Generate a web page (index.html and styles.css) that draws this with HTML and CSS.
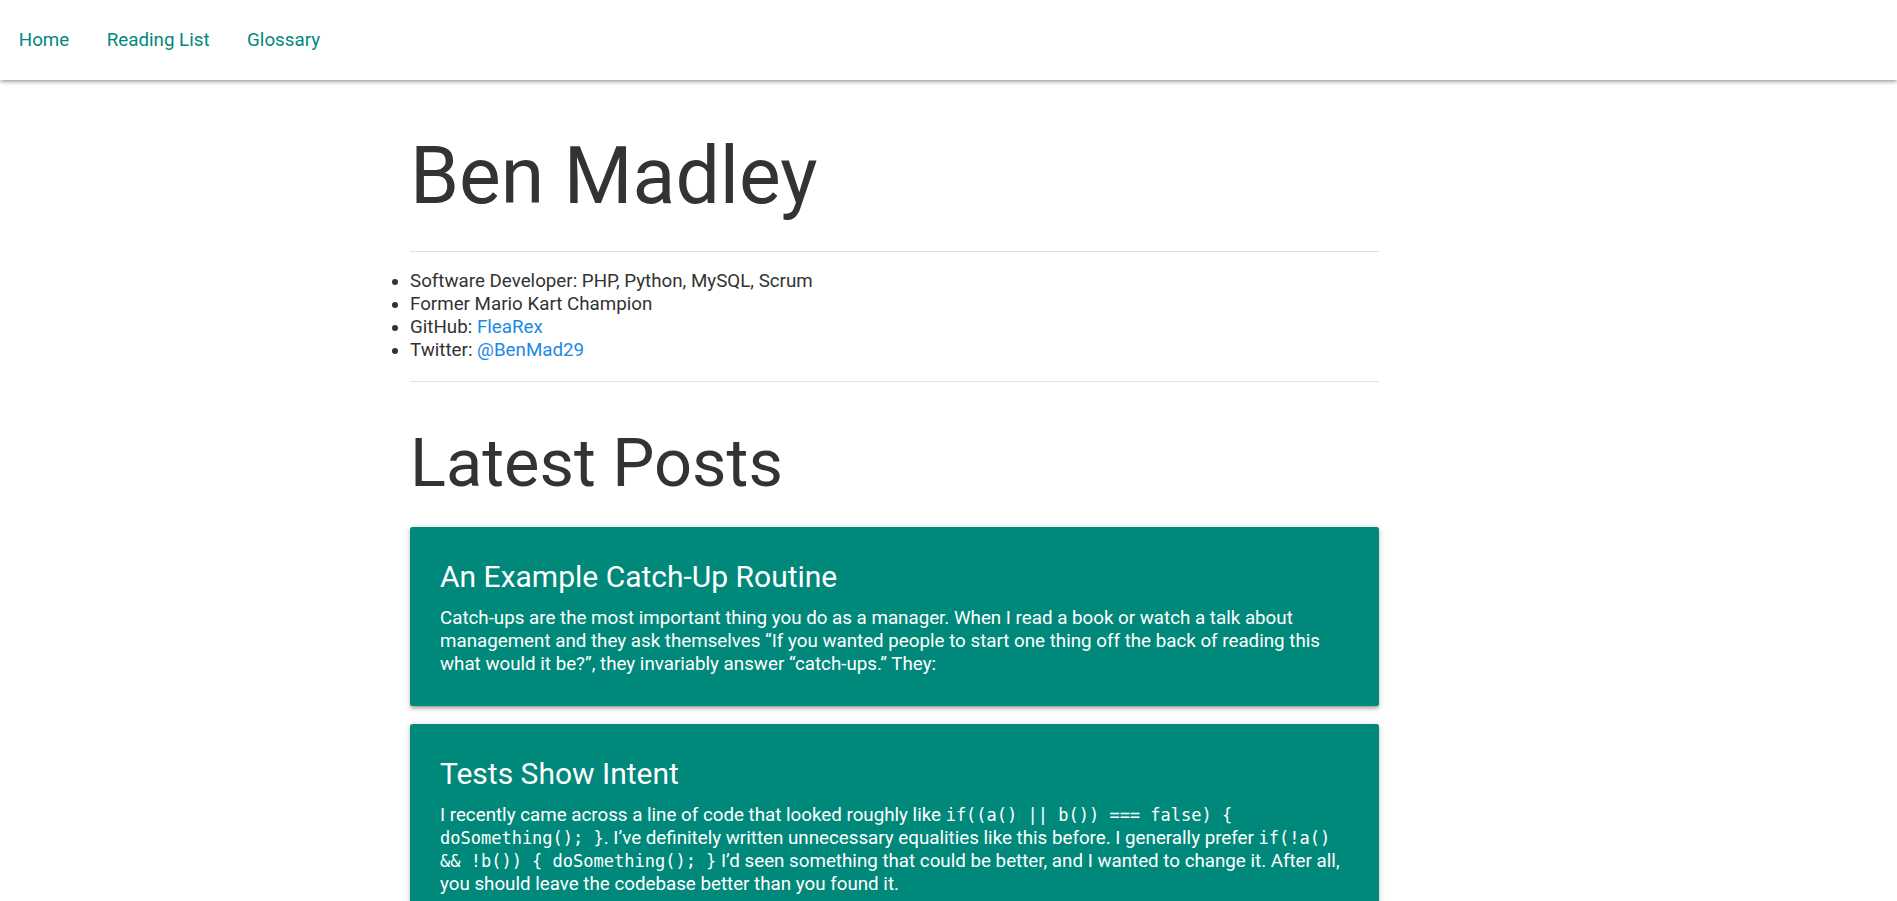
FILE: index.html
```html
<!DOCTYPE html>
<html lang="en">
<head>
<meta charset="utf-8">
<title>Ben Madley</title>
<link rel="stylesheet" href="styles.css">
</head>
<body>
<nav class="topnav">
  <ul class="nav-links">
    <li><a href="#">Home</a></li>
    <li><a href="#">Reading List</a></li>
    <li><a href="#">Glossary</a></li>
  </ul>
</nav>
<main class="content">
  <h1 class="page-title">Ben Madley</h1>
  <hr class="divider">
  <ul class="about">
    <li>Software Developer: PHP, Python, MySQL, Scrum</li>
    <li>Former Mario Kart Champion</li>
    <li>GitHub: <a href="#">FleaRex</a></li>
    <li>Twitter: <a href="#">@BenMad29</a></li>
  </ul>
  <hr class="divider">
  <h2 class="section-title">Latest Posts</h2>
  <article class="card">
    <div class="card-content">
      <span class="card-title">An Example Catch-Up Routine</span>
      <p>Catch-ups are the most important thing you do as a manager. When I read a book or watch a talk about management and they ask themselves “If you wanted people to start one thing off the back of reading this what would it be?”, they invariably answer “catch-ups.” They:</p>
    </div>
  </article>
  <article class="card">
    <div class="card-content">
      <span class="card-title">Tests Show Intent</span>
      <p>I recently came across a line of code that looked roughly like <code>if((a() || b()) === false) { doSomething(); }</code>. I’ve definitely written unnecessary equalities like this before. I generally prefer <code>if(!a() &amp;&amp; !b()) { doSomething(); }</code> I’d seen something that could be better, and I wanted to change it. After all, you should leave the codebase better than you found it.</p>
    </div>
  </article>
</main>
</body>
</html>
```
FILE: styles.css
```css
html {
  font-size: 18.75px;
}
body {
  margin: 0;
  font-family: Roboto, "Liberation Sans", sans-serif;
  font-size: 18.75px;
  line-height: 23px;
  color: #333333;
  background: #ffffff;
}
a {
  color: #1e88e5;
  text-decoration: none;
}
.topnav {
  height: 80px;
  background: #ffffff;
  box-shadow: 0 2.5px 2.5px 0 rgba(0,0,0,0.14), 0 3.75px 1.25px -2.5px rgba(0,0,0,0.12), 0 1.25px 6.25px 0 rgba(0,0,0,0.2);
}
.nav-links {
  display: flex;
  margin: 0;
  padding: 0;
  list-style: none;
}
.nav-links a {
  display: block;
  padding: 0 18.75px;
  line-height: 80px;
  color: #00897b;
  font-size: 18.75px;
}
.content {
  margin-left: 410px;
  width: 969px;
}
.page-title {
  font-size: 78.75px;
  line-height: 110%;
  font-weight: 400;
  margin: 52.5px 0 31.5px;
}
.divider {
  border: 0;
  height: 1px;
  background: #e0e0e0;
  margin: 9.4px 0;
}
.about {
  margin: 18.75px 0;
  padding: 0;
  list-style: disc outside;
}
.section-title {
  font-size: 66.75px;
  line-height: 110%;
  font-weight: 400;
  margin: 44.5px 0 26.7px;
}
.card {
  background: #00897b;
  color: #ffffff;
  border-radius: 2.5px;
  margin: 9.4px 0 18.75px;
  box-shadow: 0 2.5px 2.5px 0 rgba(0,0,0,0.14), 0 3.75px 1.25px -2.5px rgba(0,0,0,0.12), 0 1.25px 6.25px 0 rgba(0,0,0,0.2);
}
.card-content {
  padding: 30px;
}
.card-title {
  display: block;
  font-size: 30px;
  line-height: 40px;
  font-weight: 400;
  margin-bottom: 10px;
}
.card-content p {
  margin: 0;
}
code {
  font-family: "DejaVu Sans Mono", "Liberation Mono", monospace;
  font-size: 17px;
  line-height: 1;
}
```
